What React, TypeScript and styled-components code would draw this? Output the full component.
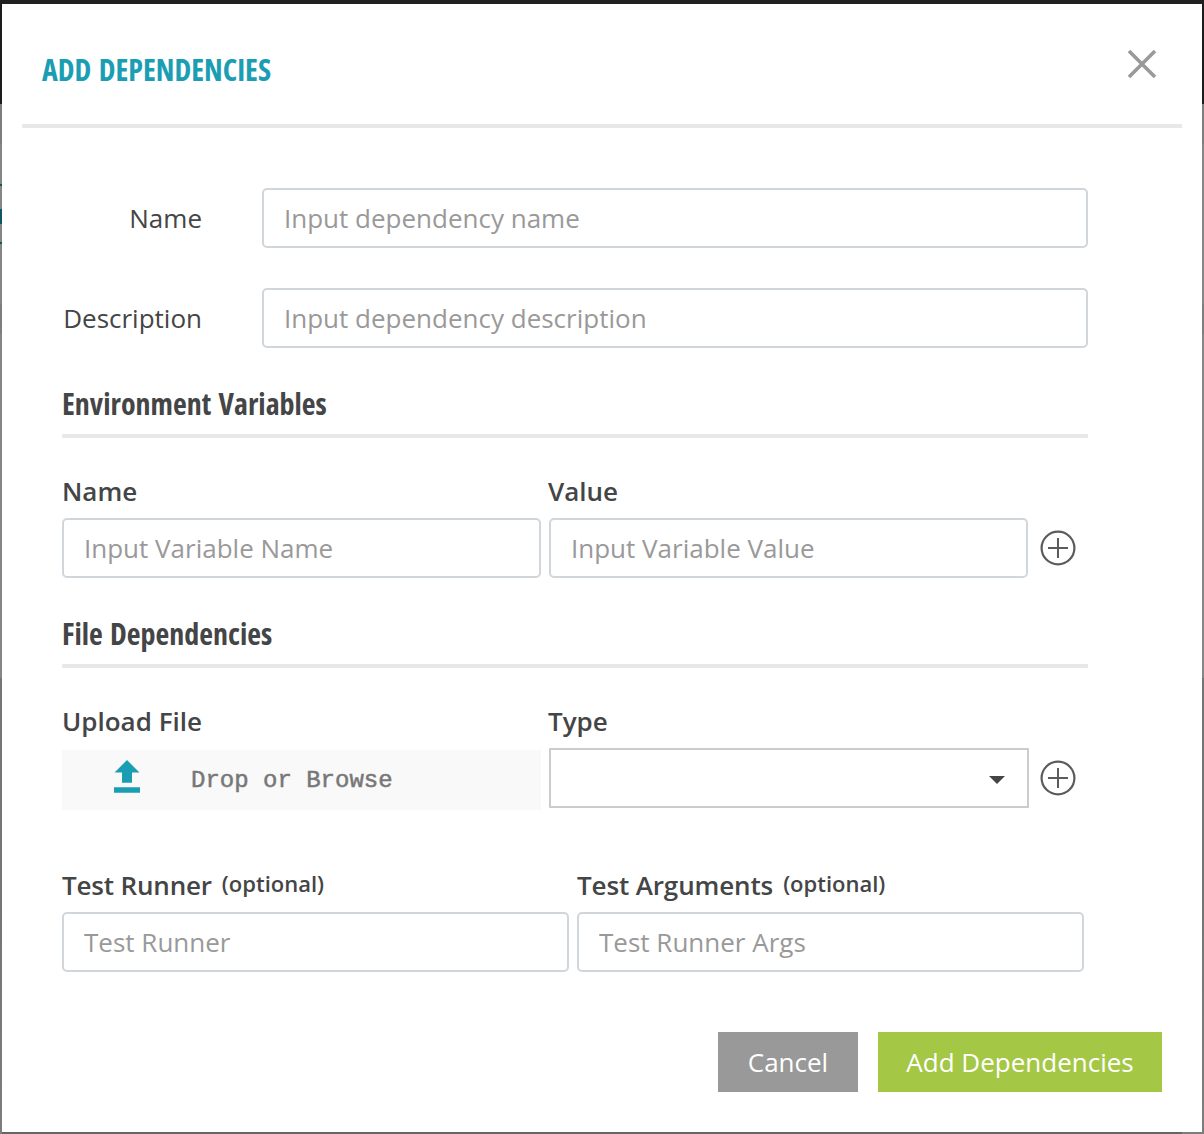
import React from "react";
import styled, { createGlobalStyle } from "styled-components";

const GlobalStyle = createGlobalStyle`
  *, *::before, *::after { box-sizing: border-box; }
  body { margin: 0; overflow: hidden; }
  body, input, button { font-family: "Open Sans", "Noto Sans", sans-serif; }
`;

const Backdrop = styled.div`
  width: 1204px;
  height: 1134px;
  padding: 4px 2px 2px;
  background:
    linear-gradient(#0d5663, #0d5663) 0 184px / 2px 2px no-repeat,
    linear-gradient(#0d5663, #0d5663) 0 209px / 2px 15px no-repeat,
    linear-gradient(#0d5663, #0d5663) 0 242px / 2px 2px no-repeat,
    linear-gradient(#666, #666) 2px 1132px / 1180px 2px no-repeat,
    linear-gradient(#212121 0 4px, #1c1c1c 4px 104px, #7e7e7e 104px 144px, #868686 144px 304px,
      #7e7e7e 304px 334px, #868686 334px 678px, #757575 678px 900px, #7d7d7d 1134px);
`;

const Modal = styled.div`
  display: flex;
  flex-direction: column;
  height: 1128px;
  padding: 0 20px;
  background: #fff;
  color: #444546;
`;

const Header = styled.header`
  display: flex;
  justify-content: space-between;
  height: 124px;
  padding: 44px 24px 0 20px;
  border-bottom: 4px solid #e8e8e8;
`;

const Title = styled.h1`
  margin: 0;
  font-size: 30px;
  line-height: 44px;
  font-weight: 700;
  font-stretch: 75%;
  word-spacing: 2px;
  color: #1b9db3;
  white-space: nowrap;
`;

const CloseButton = styled.button`
  display: flex;
  width: 32px;
  height: 32px;
  padding: 0;
  border: 0;
  background: none;
`;

const Form = styled.form`
  display: flex;
  flex-direction: column;
  width: 1066px;
  padding: 60px 0 0 40px;
`;

const FieldRow = styled.label`
  display: grid;
  grid-template-columns: 140px 826px;
  column-gap: 60px;
  align-items: center;
  margin-bottom: 40px;
  font-size: 26px;
  text-align: right;
`;

const Input = styled.input`
  width: 100%;
  height: 60px;
  padding: 0 20px;
  border: 2px solid #d1d6da;
  border-radius: 5px;
  background: #fff;
  font-size: 26px;
  color: #444546;
  &::placeholder { color: #999; opacity: 1; }
`;

const SectionTitle = styled.h2<{ $gap: number }>`
  height: 56px;
  margin: ${(p) => p.$gap}px 0 34px;
  border-bottom: 4px solid #e8e8e8;
  font-size: 30px;
  line-height: 44px;
  font-weight: 700;
  font-stretch: 75%;
  word-spacing: 2px;
  white-space: nowrap;
`;

const Columns = styled.div<{ $col: number; $top?: number }>`
  display: grid;
  grid-template-columns: ${(p) => `${p.$col}px ${p.$col}px`} auto;
  column-gap: 8px;
  justify-content: start;
  align-items: end;
  margin-top: ${(p) => p.$top ?? 0}px;
`;

const Column = styled.div`
  display: flex;
  flex-direction: column;
`;

const Label = styled.div<{ $tracking?: number; $indent?: number }>`
  display: flex;
  align-items: baseline;
  height: 46px;
  margin-left: ${(p) => p.$indent ?? 0}px;
  font-size: 26px;
  line-height: 38px;
  font-weight: 600;
  letter-spacing: ${(p) => p.$tracking ?? 0}px;
  white-space: nowrap;
`;

const Optional = styled.span`
  margin: -2px 0 0 10px;
  align-self: flex-start;
  font-size: 22px;
  letter-spacing: 0;
`;

const AddButton = styled.button`
  display: flex;
  align-items: center;
  height: 60px;
  margin-left: 4px;
  padding: 0;
  border: 0;
  background: none;
`;

const DropZone = styled.div`
  display: flex;
  align-items: center;
  height: 60px;
  margin: 2px 0 -2px;
  padding-left: 49px;
  background: #f9f9f9;
  font-family: "Liberation Mono", monospace;
  font-size: 24px;
  color: #777;

  svg {
    margin-top: -5px;
  }
`;

const DropText = styled.span`
  margin: 1px 0 0 48px;
  -webkit-text-stroke: 0.5px #777;
`;

const Select = styled.div`
  display: flex;
  align-items: center;
  justify-content: flex-end;
  width: 480px;
  height: 60px;
  padding: 4px 22px 0 0;
  border: 2px solid #ccc;
`;

const Footer = styled.footer`
  display: flex;
  justify-content: flex-end;
  gap: 20px;
  margin-top: 60px;
  padding-right: 20px;
`;

const Button = styled.button<{ $width: number; $color: string }>`
  width: ${(p) => p.$width}px;
  height: 60px;
  padding: 0;
  border: 0;
  background: ${(p) => p.$color};
  color: #fff;
  font-size: 26px;
`;

const PlusCircle = () => (
  <svg width="36" height="36" viewBox="0 0 36 36" fill="none" stroke="#5b5b5b" strokeWidth="2.2">
    <circle cx="18" cy="18" r="16.4" />
    <path d="M18 8v20M8 18h20" strokeWidth="2" />
  </svg>
);

const UploadIcon = () => (
  <svg width="32" height="36" viewBox="0 0 32 36" fill="#1b9db3">
    <path d="M16 0 28.5 12.5H21V22.700H11V12.500H3.500ZM3 27.300h26v5.500H3z" />
  </svg>
);

export default function App() {
  return (
    <>
      <GlobalStyle />
      <Backdrop>
        <Modal role="dialog">
          <Header>
            <Title>ADD DEPENDENCIES</Title>
            <CloseButton type="button" aria-label="Close">
              <svg width="32" height="32" viewBox="0 0 32 32" stroke="#999" strokeWidth="3.6">
                <path d="M3 3l26 26M29 3 3 29" />
              </svg>
            </CloseButton>
          </Header>
          <Form>
            <FieldRow>
              Name
              <Input placeholder="Input dependency name" />
            </FieldRow>
            <FieldRow>
              Description
              <Input placeholder="Input dependency description" />
            </FieldRow>
            <SectionTitle $gap={-6}>Environment Variables</SectionTitle>
            <Columns $col={479}>
              <Column>
                <Label>Name</Label>
                <Input placeholder="Input Variable Name" />
              </Column>
              <Column>
                <Label $indent={-1}>Value</Label>
                <Input placeholder="Input Variable Value" />
              </Column>
              <AddButton type="button" aria-label="Add variable">
                <PlusCircle />
              </AddButton>
            </Columns>
            <SectionTitle $gap={34}>File Dependencies</SectionTitle>
            <Columns $col={479}>
              <Column>
                <Label>Upload File</Label>
                <DropZone>
                  <UploadIcon />
                  <DropText>Drop or Browse</DropText>
                </DropZone>
              </Column>
              <Column>
                <Label $indent={-1}>Type</Label>
                <Select>
                  <svg width="16" height="8" viewBox="0 0 16 8" fill="#444546">
                    <path d="M0 0h16L8 8z" />
                  </svg>
                </Select>
              </Column>
              <AddButton type="button" aria-label="Add file">
                <PlusCircle />
              </AddButton>
            </Columns>
            <Columns $col={507} $top={58}>
              <Column>
                <Label $tracking={-0.17}>
                  Test Runner <Optional>(optional)</Optional>
                </Label>
                <Input placeholder="Test Runner" />
              </Column>
              <Column>
                <Label $tracking={-0.13}>
                  Test Arguments <Optional>(optional)</Optional>
                </Label>
                <Input placeholder="Test Runner Args" />
              </Column>
            </Columns>
          </Form>
          <Footer>
            <Button type="button" $width={140} $color="#999">Cancel</Button>
            <Button type="button" $width={284} $color="#a4c746">Add Dependencies</Button>
          </Footer>
        </Modal>
      </Backdrop>
    </>
  );
}
